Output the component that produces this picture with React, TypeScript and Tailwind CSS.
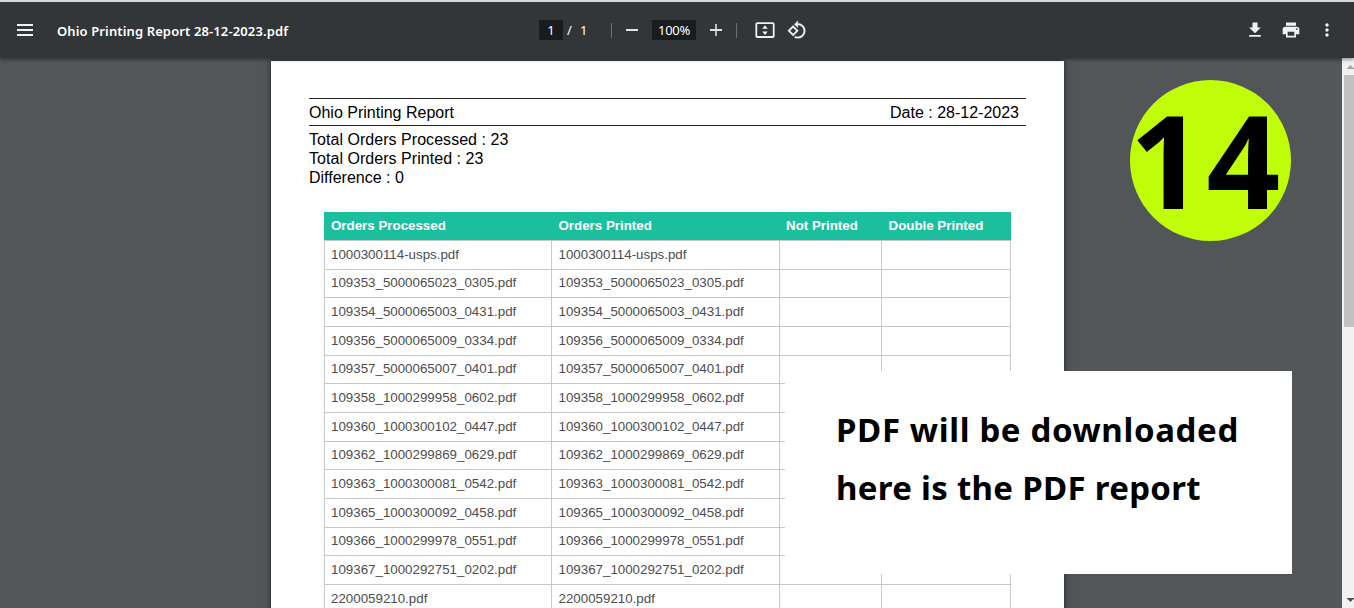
import { MdFileDownload, MdMoreVert, MdPrint } from "react-icons/md";

const orders = [
  "1000300114-usps.pdf",
  "109353_5000065023_0305.pdf",
  "109354_5000065003_0431.pdf",
  "109356_5000065009_0334.pdf",
  "109357_5000065007_0401.pdf",
  "109358_1000299958_0602.pdf",
  "109360_1000300102_0447.pdf",
  "109362_1000299869_0629.pdf",
  "109363_1000300081_0542.pdf",
  "109365_1000300092_0458.pdf",
  "109366_1000299978_0551.pdf",
  "109367_1000292751_0202.pdf",
  "2200059210.pdf",
];

function MenuIcon() {
  return (
    <svg className="h-4 w-4" viewBox="0 0 16 16" fill="#f1f1f1" shapeRendering="crispEdges">
      <path d="M0 2h16v2H0zM0 7h16v2H0zM0 12h16v2H0z" />
    </svg>
  );
}

function FitPageIcon() {
  return (
    <svg className="h-4 w-5" viewBox="0 0 20 16" fill="none">
      <rect x="1.3" y="1.2" width="17.4" height="13.8" rx="1" stroke="#f1f1f1" strokeWidth="1.8" />
      <path d="M10 3.2 12.8 6.8H7.2zM10 13 7.2 9.4h5.6z" fill="#f1f1f1" />
    </svg>
  );
}

function RotateIcon() {
  return (
    <svg className="h-5 w-5" viewBox="0 0 24 24" fill="#f1f1f1" stroke="#f1f1f1" strokeWidth="0.3">
      <path d="M7.34 6.41L.86 12.9l6.49 6.48 6.49-6.48-6.5-6.49zM3.69 12.9l3.66-3.66L11 12.9l-3.66 3.66-3.65-3.66zm15.67-6.26C17.61 4.88 15.3 4 13 4V.76L8.76 5 13 9.24V6c1.79 0 3.58.68 4.95 2.05 2.73 2.73 2.73 7.17 0 9.9C16.58 19.32 14.79 20 13 20c-.97 0-1.94-.21-2.84-.61l-1.49 1.49C10.02 21.62 11.51 22 13 22c2.3 0 4.61-.88 6.36-2.64 3.52-3.51 3.52-9.21 0-12.72z" />
    </svg>
  );
}

function Toolbar() {
  return (
    <header className="relative z-10 h-[58px] shrink-0 border-t-2 border-[#d5d8da] bg-[#323639] text-[13px] text-white shadow-[0_2px_3px_rgba(0,0,0,0.35)]">
      <div className="flex h-[56px] items-center pl-[17px] font-['Noto_Sans',sans-serif]">
        <MenuIcon />
        <h1 className="ml-6 w-[482px] whitespace-nowrap pt-[3px] font-semibold tracking-[0.12px]">
          Ohio Printing Report 28-12-2023.pdf
        </h1>
        <span className="flex h-5 w-6 items-center justify-center bg-[#191b1c] pt-px">1</span>
        <span className="ml-1 w-[13px] pt-px">/</span>
        <span className="w-[31px] pt-px">1</span>
        <i className="h-[15px] w-px bg-[#6f7274]" />
        <svg className="ml-3.5 h-3 w-3" viewBox="0 0 12 12" fill="#e2e2e2" shapeRendering="crispEdges">
          <path d="M0 5h12v2H0z" />
        </svg>
        <span className="ml-3.5 flex h-5 w-11 items-center justify-center bg-[#191b1c] pt-px tracking-[-0.3px]">100%</span>
        <svg className="ml-3.5 h-3 w-3" viewBox="0 0 12 12" fill="#e2e2e2">
          <path d="M5.2 0h1.6v5H12v2H6.8v5H5.2V7H0V5h5.2z" />
        </svg>
        <i className="ml-3.5 h-[15px] w-px bg-[#6f7274]" />
        <div className="ml-[18px]"><FitPageIcon /></div>
        <div className="ml-3"><RotateIcon /></div>
        <MdFileDownload className="ml-[438px] h-5 w-5 text-[#f1f1f1]" />
        <MdPrint className="ml-4 h-5 w-5 text-[#f1f1f1]" />
        <MdMoreVert className="ml-4 h-5 w-5 text-[#f1f1f1]" />
      </div>
    </header>
  );
}

function OrdersTable() {
  return (
    <div className="ml-[15px] mt-[25px] w-[687px] text-[13.33px]">
      <div className="grid h-7 grid-cols-[227.5px_227.5px_102.5px_1fr] items-center bg-[#1cbf9d] font-bold text-white">
        <span className="pl-[7px]">Orders Processed</span>
        <span className="pl-[7px]">Orders Printed</span>
        <span className="pl-[7px]">Not Printed</span>
        <span className="pl-[7px]">Double Printed</span>
      </div>
      <div className="border-l border-[#cacaca] text-[#4d4d4d]">
        {orders.map((name) => (
          <div key={name} className="grid h-[28.67px] grid-cols-[227px_228px_102px_1fr] border-t border-[#c6c6c6]">
            <span className="border-r border-[#cacaca] pl-1.5 pt-[0.7px] leading-[26px]">{name}</span>
            <span className="border-r border-[#cacaca] pl-[6.5px] pt-[0.7px] leading-[26px]">{name}</span>
            <span className="border-r border-[#cacaca]" />
            <span className="border-r border-[#cacaca]" />
          </div>
        ))}
      </div>
    </div>
  );
}

function Scrollbar() {
  return (
    <div className="flex w-3 shrink-0 flex-col overflow-hidden bg-[#f1f1f1]">
      <svg className="h-[17px] w-[17px] shrink-0" viewBox="0 0 17 17" fill="#a3a3a3">
        <path d="M4.5 11h8l-4-4z" />
      </svg>
      <div className="ml-0.5 h-[252px] w-[13px] shrink-0 bg-[#c1c1c1]" />
      <svg className="mt-auto h-[17px] w-[17px] shrink-0" viewBox="0 0 17 17" fill="#505050">
        <path d="M4.5 7h8l-4 4z" />
      </svg>
    </div>
  );
}

export default function App() {
  return (
    <div className="relative flex h-[608px] w-[1354px] flex-col overflow-hidden bg-[#525659]">
      <Toolbar />
      <div className="flex min-h-0 flex-1">
        <main className="min-w-0 flex-1 pl-[271px] pt-[3px]">
          <article className="h-[620px] w-[793px] bg-white pl-[38px] pt-[37px] font-['Liberation_Sans',sans-serif] text-black shadow-[0_0_6px_rgba(0,0,0,0.6)]">
            <div className="flex h-7 w-[717px] items-center justify-between border-y border-[#222] pr-[7px] pt-0.5">
              <span>Ohio Printing Report</span>
              <span>Date : 28-12-2023</span>
            </div>
            <div className="pt-1 leading-[19px]">
              <p className="tracking-[0.04px]">Total Orders Processed : 23</p>
              <p className="tracking-[0.04px]">Total Orders Printed : 23</p>
              <p>Difference : 0</p>
            </div>
            <OrdersTable />
          </article>
        </main>
        <Scrollbar />
      </div>
      <div className="absolute left-[1130px] top-[80px] flex h-[161px] w-[161px] items-center justify-center rounded-full bg-[#c0fd09] pb-0.5 pr-2 font-['Noto_Sans',sans-serif] text-[129px] font-bold leading-none tracking-[3px] text-black">
        14
      </div>
      <div className="absolute left-[785px] top-[371px] h-[203px] w-[507px] whitespace-nowrap bg-white pl-[51px] pt-[30px] font-['Noto_Sans',sans-serif] text-[33px] font-bold leading-[58px] text-black">
        <p className="tracking-[0.63px]">PDF will be downloaded</p>
        <p className="tracking-[0.3px]">here is the PDF report</p>
      </div>
    </div>
  );
}
